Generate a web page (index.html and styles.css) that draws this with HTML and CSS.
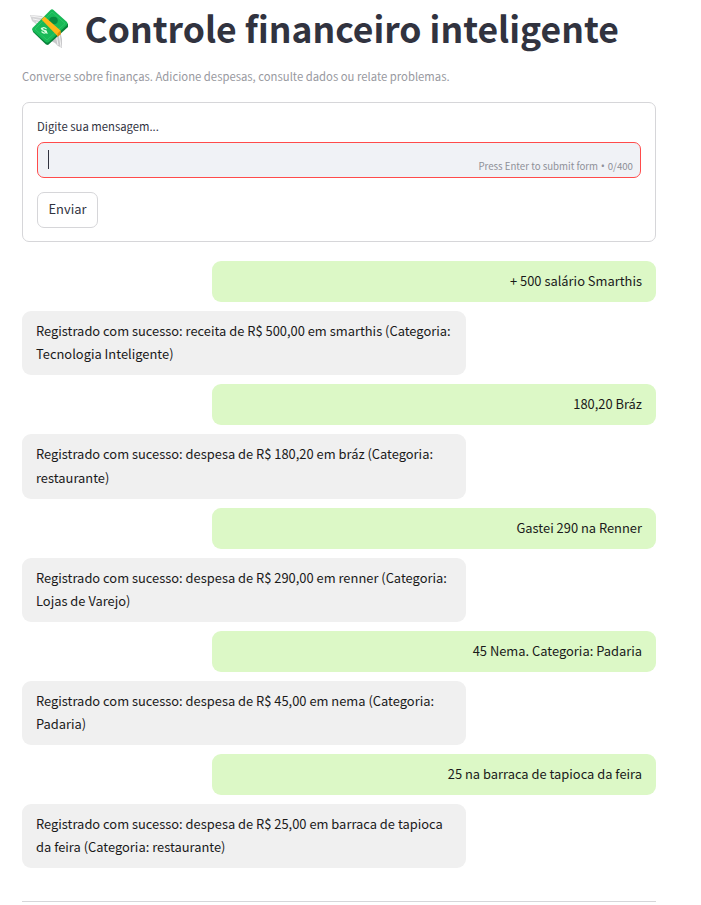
FILE: index.html
```html
<!DOCTYPE html>
<html lang="pt-BR">
<head>
<meta charset="utf-8">
<title>Controle financeiro inteligente</title>
<link rel="stylesheet" href="styles.css">
</head>
<body>
<main class="page">
  <header>
    <h1 class="title">
      <svg class="title-icon" viewBox="0 0 60 55" aria-hidden="true">
        <path d="M10 15 22 16 27 22 20 28 16 24 12 21Z" fill="#d4d4d6"/>
        <path d="M11 16 24 18M13 19 23 21M16 22 22 24" stroke="#f5f5f5" stroke-width="1"/>
        <path d="M35 32 40 31 42 39 42 48 38 46 35 43 31 41Z" fill="#c9c9cb"/>
        <path d="M36 34 38 45M39 33 41 47" stroke="#f2f2f2" stroke-width="1"/>
        <path d="M12.5 29 32 10 48 24 48 27 28 45 26 44.5 13 32Z" fill="#07823a"/>
        <path d="M12.5 28 30.5 10Q32 8.500 33.500 10L47 22Q48 23.500 47 25L29 42Q27 43.500 25.500 42L13 31Q11.500 29.500 12.500 28Z" fill="#18b957"/>
        <path d="M15 29 32 12 45 23.500 27 40Z" fill="none" stroke="#35ce70" stroke-width=".6"/>
        <ellipse cx="33.500" cy="20.500" rx="4.300" ry="3.800" fill="#078b3e"/>
        <path d="M21.500 19.500 24.500 16.500 40.500 30.500 40.500 34.500 37.500 36Z" fill="#ffb719"/>
        <path d="M37.500 33.500 40.500 30.500 40.500 34.500 37.500 37Z" fill="#e58b07"/>
        <path d="M26.500 29Q24 26.500 22 28.500C20.500 31 27 29.500 26.500 32Q24.500 34.500 21.500 31.500M21 28 27.500 33.500" fill="none" stroke="#d7ffdf" stroke-width="1.100"/>
      </svg>
      <span>Controle financeiro inteligente</span>
    </h1>
    <p class="caption">Converse sobre finanças. Adicione despesas, consulte dados ou relate problemas.</p>
  </header>
  <section class="form">
    <div class="label">Digite sua mensagem...</div>
    <div class="input">
      <span class="caret"></span>
      <span class="hint">Press Enter to submit form <span class="dot">•</span> 0/400</span>
    </div>
    <button class="submit" type="button">Enviar</button>
  </section>
  <section class="chat">
    <div class="bubble user">+ 500 salário Smarthis</div>
    <div class="bubble bot">Registrado com sucesso: receita de R$ 500,00 em smarthis (Categoria:<br>Tecnologia Inteligente)</div>
    <div class="bubble user">180,20 Bráz</div>
    <div class="bubble bot">Registrado com sucesso: despesa de R$ 180,20 em bráz (Categoria:<br>restaurante)</div>
    <div class="bubble user">Gastei 290 na Renner</div>
    <div class="bubble bot">Registrado com sucesso: despesa de R$ 290,00 em renner (Categoria:<br>Lojas de Varejo)</div>
    <div class="bubble user">45 Nema. Categoria: Padaria</div>
    <div class="bubble bot">Registrado com sucesso: despesa de R$ 45,00 em nema (Categoria:<br>Padaria)</div>
    <div class="bubble user">25 na barraca de tapioca da feira</div>
    <div class="bubble bot">Registrado com sucesso: despesa de R$ 25,00 em barraca de tapioca<br>da feira (Categoria: restaurante)</div>
  </section>
  <hr class="divider">
</main>
</body>
</html>
```
FILE: styles.css
```css
* { box-sizing: border-box; }

body {
  margin: 0;
  height: 905px;
  overflow: hidden;
  background: #fff;
  color: #31333f;
  font-family: "Noto Sans CJK SC", "Open Sans", sans-serif;
  font-size: 12.9px;
}

.page { width: 634px; margin-left: 22px; }

.title {
  display: flex;
  align-items: flex-start;
  height: 58px;
  margin: 0;
  font-size: 35.5px;
  font-weight: 700;
  line-height: 55px;
  white-space: nowrap;
}

.title-icon { flex: none; width: 60px; height: 55px; margin: 0 4.4px 0 -2px; }

.caption {
  margin: 8px 0 0;
  color: #9899a0;
  font-size: 11.3px;
  line-height: 20px;
}

.form {
  height: 140px;
  margin-top: 16px;
  padding: 13px 14px;
  border: 1px solid #d6d6d9;
  border-radius: 7px;
}

.label { height: 26px; font-size: 11.3px; line-height: 20px; }

.input {
  display: flex;
  justify-content: space-between;
  align-items: center;
  height: 36px;
  padding: 0 7px 0 10px;
  border: 1px solid #ff4b4b;
  border-radius: 7px;
  background: #f0f2f6;
}

.caret { width: 1px; height: 19px; margin-bottom: 2px; background: #31333f; }

.hint { margin-top: 11px; color: #8e9098; font-size: 9.68px; line-height: 14px; }

.dot { margin: 0 .6px; font-family: "Open Sans", sans-serif; font-size: 11px; line-height: 1; }

.submit {
  display: block;
  width: 61px;
  height: 36px;
  margin-top: 14px;
  padding: 0 0 2px;
  border: 1px solid #d6d6d9;
  border-radius: 7px;
  background: #fff;
  color: inherit;
  font: inherit;
  line-height: 32px;
}

.chat {
  display: flex;
  flex-direction: column;
  gap: 9px;
  margin-top: 19.3px;
}

.bubble {
  width: 444px;
  padding: 8px 14px 10px;
  border-radius: 9px;
  color: #1a1a1a;
  line-height: 23.04px;
  white-space: nowrap;
}

.user { align-self: flex-end; background: #dcf8c6; text-align: right; }
.bot { background: #f0f0f0; }

.divider { height: 1px; margin: 33px 0 0; border: 0; background: #d6d6d9; }
```
